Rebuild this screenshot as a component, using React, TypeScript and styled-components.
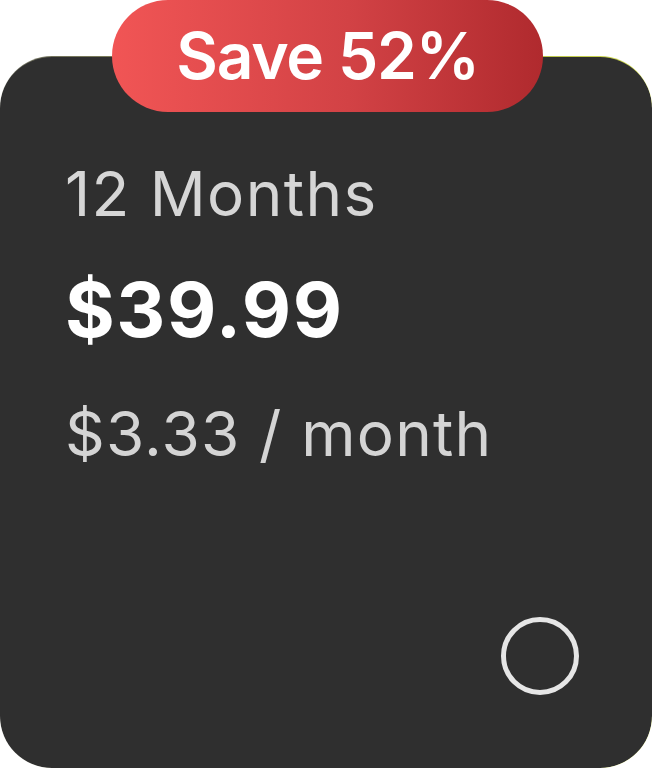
import React from "react";
import styled, { createGlobalStyle } from "styled-components";

const GlobalStyle = createGlobalStyle`
	html, body {
		margin: 0;
		padding: 0;
		background: #ffffff;
	}
	body {
		font-family: Inter, "Noto Sans", "Liberation Sans", sans-serif;
		-webkit-font-smoothing: antialiased;
	}
`;

export default function App() {
	const plan = {
		saving: 52,
		months: 12,
		price: "$39.99",
		perMonth: "$3.33",
	};

	return (
		<>
			<GlobalStyle />
			<PlanWrap>
				<SaveBadge>Save {plan.saving}%</SaveBadge>
				<PlanCard>
					<Period>{plan.months} Months</Period>
					<Price>{plan.price}</Price>
					<PerMonth>{plan.perMonth} / month</PerMonth>
					<Radio />
				</PlanCard>
			</PlanWrap>
		</>
	);
}

const PlanWrap = styled.div`
	position: relative;
	width: 652px;
	height: 768px;
	padding-top: 56px;
	box-sizing: border-box;
	display: flex;
`;

const SaveBadge = styled.div`
	position: absolute;
	top: 0;
	left: 112px;
	width: 431px;
	height: 112px;
	border-radius: 56px;
	background: linear-gradient(90deg, #f15555 0%, #d24245 55%, #b02a2e 100%);
	color: #ffffff;
	font-size: 64px;
	font-weight: 600;
	letter-spacing: -1.2px;
	display: flex;
	align-items: center;
	justify-content: center;
	padding-bottom: 2px;
	box-sizing: border-box;
	z-index: 2;
`;

const PlanCard = styled.div`
	flex: 1;
	display: flex;
	flex-direction: column;
	box-sizing: border-box;
	padding: 100px 73px 73px 65px;
	border-radius: 52px;
	border-top: 1.5px solid transparent;
	background:
		linear-gradient(#2f2f2f, #2f2f2f) padding-box,
		linear-gradient(90deg, #6d6d60 0%, #9aa045 60%, #d3de4f 100%) border-box;
`;

const Period = styled.div`
	font-size: 62px;
	line-height: 1.2;
	letter-spacing: 1.4px;
	color: #d6d6d6;
	font-weight: 400;
`;

const Price = styled.div`
	margin-top: 33px;
	font-size: 76px;
	line-height: 1.2;
	letter-spacing: 1.6px;
	color: #ffffff;
	font-weight: 700;
`;

const PerMonth = styled.div`
	margin-top: 41px;
	font-size: 62px;
	line-height: 1.2;
	letter-spacing: 1.2px;
	color: #d4d4d4;
	font-weight: 400;
`;

const Radio = styled.div`
	margin-top: auto;
	align-self: flex-end;
	width: 78px;
	height: 78px;
	box-sizing: border-box;
	border-radius: 50%;
	border: 5px solid #e6e6e6;
`;
